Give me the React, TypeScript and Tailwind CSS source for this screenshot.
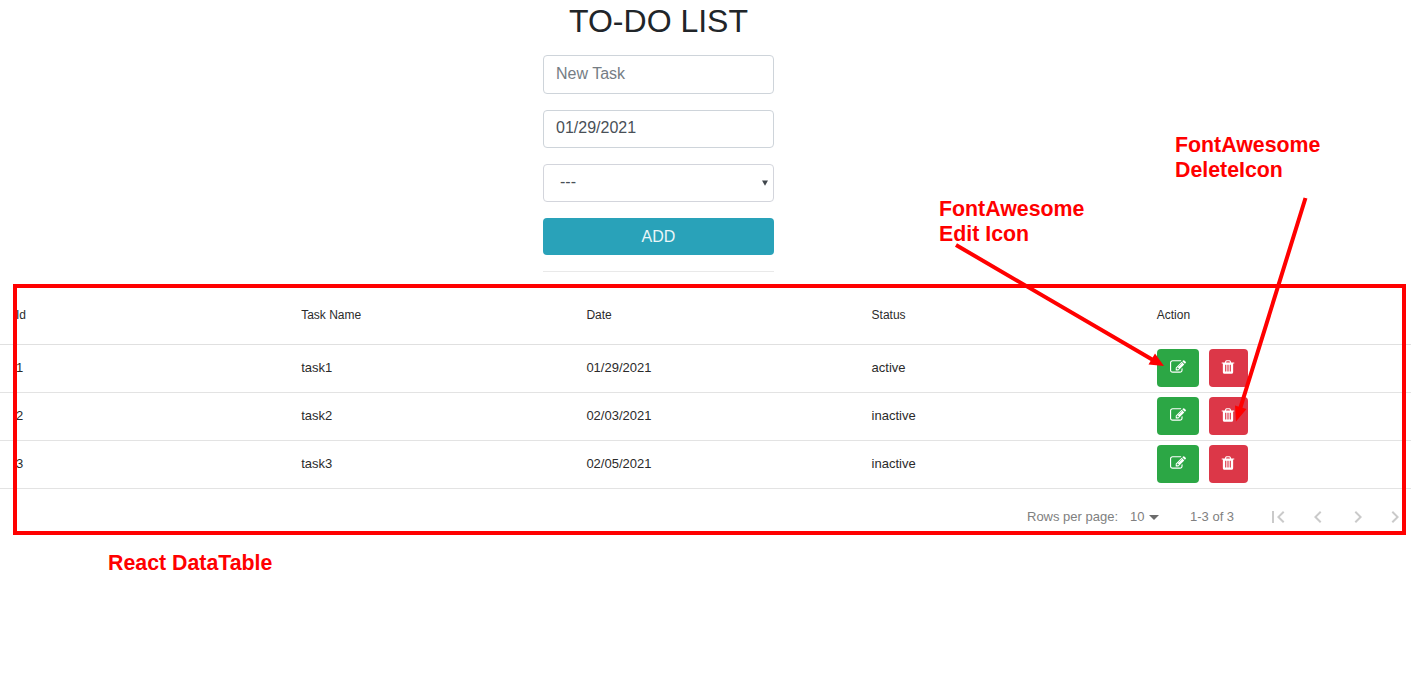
type Task = { id: number; name: string; date: string; status: string };

const tasks: Task[] = [
  { id: 1, name: "task1", date: "01/29/2021", status: "active" },
  { id: 2, name: "task2", date: "02/03/2021", status: "inactive" },
  { id: 3, name: "task3", date: "02/05/2021", status: "inactive" },
];

function EditIcon() {
  return (
    <svg viewBox="0 0 1792 1792" className="size-4 fill-white">
      <path d="M888 1184l116-116-152-152-116 116v56h96v96h56zm440-720q-16-16-33 1l-350 350q-17 17-1 33t33-1l350-350q17-17 1-33zm80 594v190q0 119-84.5 203.5t-203.5 84.5h-832q-119 0-203.5-84.5t-84.5-203.5v-832q0-119 84.5-203.5t203.5-84.5h832q63 0 117 25 15 7 18 23 3 17-9 29l-49 49q-14 14-32 8-23-6-45-6h-832q-66 0-113 47t-47 113v832q0 66 47 113t113 47h832q66 0 113-47t47-113v-126q0-13 9-22l64-64q15-15 35-7t20 29zm-96-738l288 288-672 672h-288v-288zm444 132l-92 92-288-288 92-92q28-28 68-28t68 28l152 152q28 28 28 68t-28 68z" />
    </svg>
  );
}

function TrashIcon() {
  return (
    <svg viewBox="0 0 1792 1792" className="size-4 fill-white">
      <path d="M704 1376v-704q0-14-9-23t-23-9h-64q-14 0-23 9t-9 23v704q0 14 9 23t23 9h64q14 0 23-9t9-23zm256 0v-704q0-14-9-23t-23-9h-64q-14 0-23 9t-9 23v704q0 14 9 23t23 9h64q14 0 23-9t9-23zm256 0v-704q0-14-9-23t-23-9h-64q-14 0-23 9t-9 23v704q0 14 9 23t23 9h64q14 0 23-9t9-23zm-544-992h448l-48-117q-7-9-17-11h-317q-10 2-17 11zm928 32v64q0 14-9 23t-23 9h-96v948q0 83-47 143.5t-113 60.5h-832q-66 0-113-58.5t-47-141.5v-952h-96q-14 0-23-9t-9-23v-64q0-14 9-23t23-9h309l70-167q15-37 54-63t79-26h320q40 0 79 26t54 63l70 167h309q14 0 23 9t9 23z" />
    </svg>
  );
}

function PageIcon({ d }: { d: string }) {
  return (
    <svg viewBox="0 0 24 24" className="size-6 shrink-0 fill-[#cacaca]">
      <path d={d} />
    </svg>
  );
}

const columns = "grid grid-cols-[repeat(4,285.2px)_1fr] items-center pl-4";

export default function App() {
  return (
    <div className="relative h-[686px] w-[1411px] overflow-hidden bg-white font-['Liberation_Sans',Arial,sans-serif] text-[#212529]">
      <form className="ml-[543px] flex w-[231px] flex-col">
        <h1 className="mb-[14px] h-[41px] text-center text-[32px] leading-[43px] whitespace-nowrap">TO-DO LIST</h1>
        <div className="mb-4 flex h-[39px] items-center rounded border border-[#ced4da] px-3 pb-[2px] text-base text-[#757d84]">New Task</div>
        <div className="mb-4 flex h-[38px] items-center rounded border border-[#ced4da] px-3 pb-[2px] text-base text-[#495057]">01/29/2021</div>
        <div className="mb-4 flex h-[38px] items-center justify-between rounded border border-[#d3d5dc] pr-[5px] pb-[2px] pl-4 text-base text-[#495057]">
          <span>---</span>
          <svg viewBox="0 0 6 6" className="mt-[1px] h-[6px] w-[6px] fill-[#40464c]">
            <path d="M0 0.5h6L3 5.8z" />
          </svg>
        </div>
        <button type="button" className="h-[37px] rounded bg-[#29a2b9] text-base text-[#eaf6f8]">ADD</button>
        <hr className="mt-4 border-t border-[#e9e9e9]" />
      </form>

      <section className="mt-[14px] text-[13px] text-[#2b2b2b]">
        <div className={`${columns} h-[59px] border-b border-[#e0e0e0] text-xs`}>
          <span>Id</span>
          <span>Task Name</span>
          <span>Date</span>
          <span>Status</span>
          <span>Action</span>
        </div>
        {tasks.map((task) => (
          <div key={task.id} className={`${columns} h-12 border-b border-[#e3e3e3] pb-px`}>
            <span>{task.id}</span>
            <span>{task.name}</span>
            <span>{task.date}</span>
            <span>{task.status}</span>
            <div className="flex gap-[10px]">
              <button type="button" className="flex h-[38px] w-[42px] items-center justify-center rounded bg-[#2ca745] pb-[2px]"><EditIcon /></button>
              <button type="button" className="flex h-[38px] w-[39px] items-center justify-center rounded bg-[#dc3748] pr-px pb-[2px]"><TrashIcon /></button>
            </div>
          </div>
        ))}
        <div className="flex h-14 items-center pl-[1027px] whitespace-nowrap text-[#808080]">
          <span className="w-[103px]">Rows per page:</span>
          <span className="w-[19px]">10</span>
          <svg viewBox="0 0 10 5" className="mr-[31px] h-[5px] w-[10px] fill-[#6b6b6b]"><path d="M0 0h10L5 5z" /></svg>
          <span className="w-[76px]">1-3 of 3</span>
          <div className="flex gap-4">
            <PageIcon d="M18.41 16.59L13.82 12l4.59-4.59L17 6l-6 6 6 6zM6 6h2v12H6z" />
            <PageIcon d="M15.41 7.41L14 6l-6 6 6 6 1.41-1.41L10.83 12z" />
            <PageIcon d="M10 6L8.59 7.41 13.17 12l-4.58 4.59L10 18l6-6z" />
            <PageIcon d="M5.59 7.41L10.18 12l-4.59 4.59L7 18l6-6-6-6zM16 6h2v12h-2z" />
          </div>
        </div>
      </section>

      <div className="absolute top-[284px] left-[13px] h-[251px] w-[1393px] border-4 border-[#ff0000]" />
      <p className="absolute top-[197px] left-[939px] text-[21.33px] leading-[25px] font-bold text-[#ff0000]">FontAwesome<br />Edit Icon</p>
      <p className="absolute top-[133px] left-[1175px] text-[21.33px] leading-[25px] font-bold text-[#ff0000]">FontAwesome<br />DeleteIcon</p>
      <p className="absolute top-[551px] left-[108px] text-[21.33px] leading-[25px] font-bold text-[#ff0000]">React DataTable</p>
      <svg viewBox="0 0 1411 686" className="pointer-events-none absolute inset-0 h-[686px] w-[1411px] fill-[#ff0000] stroke-[#ff0000]">
        <path d="M956 245L1153 360M1305.500 198L1240 409" strokeWidth="4" />
        <path stroke="none" d="M1164 366l-15.500-1.500 6.500-11zM1236 421.500l-1-16 11.500 3.500z" />
      </svg>
    </div>
  );
}
